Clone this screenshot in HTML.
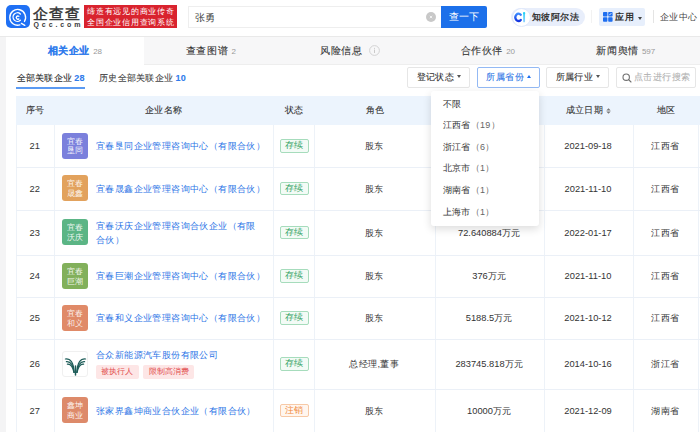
<!DOCTYPE html>
<html><head><meta charset="utf-8">
<style>
*{margin:0;padding:0;box-sizing:border-box}
html,body{white-space:nowrap;width:700px;height:432px;overflow:hidden;background:#f4f4f5;font-family:"Liberation Sans",sans-serif;color:#333;position:relative}
.a{position:absolute}
.hdr{left:0;top:0;width:700px;height:37px;background:#fff;border-bottom:1px solid #e9e9e9}
.logo{left:6.3px;top:5px;width:23.3px;height:23.3px;border-radius:5px;background:#1f70f4}
.brand{left:33px;top:6px;font-size:15px;line-height:16px;color:#333;letter-spacing:1px;-webkit-text-stroke:0.45px #333}
.qcc{left:33.5px;top:20px;font-size:7px;line-height:9px;letter-spacing:2.9px;color:#3a3a3a;font-weight:bold}
.banner{left:84px;top:5px;width:93px;height:23.3px;background:#d9232e;color:#fff;font-size:8px;line-height:11px;padding:0.8px 0 0 3.2px;letter-spacing:0.75px}
.search{left:188px;top:6.2px;width:254px;height:22.2px;border:1px solid #eeeeee;border-right:none;background:#fff}
.search .t{left:6px;top:3.5px;font-size:10px;line-height:13px;color:#444}
.clr{left:426px;top:12px;width:10px;height:10px;border-radius:50%;background:#c8c8c8}
.btn{left:441px;top:6px;width:46px;height:22.3px;background:#1c70ea;border-radius:0 2px 2px 0;color:#fff;font-size:10px;line-height:22px;text-align:center}
.pill{left:511px;top:8px;width:74px;height:18px;border-radius:9px;background:#e8eefb}
.pill .ic{left:0.5px;top:-0.5px;width:19px;height:19px;border-radius:50%;background:#fff;border:1.5px solid #dfe8fb}
.pill .t{left:21px;top:3px;font-size:9px;line-height:13px;font-weight:bold;color:#333;letter-spacing:0.45px}
.app{left:599px;top:8px;width:46px;height:18.2px;border-radius:2px;background:#e7effc}
.app .t{left:16.3px;top:3.2px;font-size:9px;line-height:13px;font-weight:bold;color:#333;letter-spacing:0.4px}
.sep{width:1px;background:#e4e4e4}
.center{left:659.5px;top:10.5px;font-size:9px;line-height:13px;color:#444;letter-spacing:0.6px}
.panel{left:6px;top:37px;width:700px;height:400px;background:#fff}
.tabs{left:6px;top:37px;width:694.5px;height:28px;background:#f7f7f8;border-bottom:1px solid #eeeeee}
.tab{top:0;height:28px;width:137.6px;text-align:center;font-size:10px;line-height:28px;color:#333;letter-spacing:0.65px}
.tab .n{font-size:8px;color:#999;margin-left:3px;letter-spacing:0}
.tab.on{background:#fff;color:#2f7bec;font-weight:bold;border-left:none;height:29px}
.tab.on .n{font-weight:normal}
.sub{top:72px;font-size:9px;line-height:13px;color:#333;letter-spacing:0.3px}
.sub b{color:#2f7bec}
.dd{top:67.1px;height:20.6px;width:62.8px;border:1px solid #e6e6e6;border-radius:2px;background:#fff;font-size:9px;line-height:19px;color:#333;padding-left:8.5px;letter-spacing:0.4px}
.dd.on{border-color:#93b9f4;color:#2b74e6}
.car{display:inline-block;width:0;height:0;border-left:2.5px solid transparent;border-right:2.5px solid transparent;border-top:3px solid #555;vertical-align:middle;margin-left:3px;position:relative;top:-1px}
.car.up{border-top:none;border-bottom:3px solid #1b6ff0}
.tbl{left:15.5px;top:95.5px;width:700px}
.th{top:95.5px;left:15.5px;width:700px;height:29.5px;background:#ecf4fd}
.vl{width:1px;background:#edf2f8}
.hl{height:1px;background:#ebf0f7;left:15.5px;width:700px}
.htx{top:103.5px;font-size:9px;line-height:13px;color:#333;letter-spacing:0.4px}
.cell{font-size:9.3px;line-height:13px;color:#333}
.cj{letter-spacing:0.35px}
.lg{width:26px;height:26px;border-radius:3px;color:rgba(255,255,255,0.92);font-size:8px;line-height:9.7px;text-align:center;padding-top:4px;letter-spacing:0.4px;padding-left:0.4px}
.nm{font-size:9px;line-height:13px;color:#2b74e6;letter-spacing:0.4px}
.st{width:29px;height:13.5px;border:1px solid #a6dcbc;background:#f3fbf6;color:#2fa060;border-radius:2px;font-size:9px;line-height:11.5px;text-align:center;letter-spacing:0.5px;padding-left:0.5px}
.st.x{border-color:#f7c9a6;background:#fff6ef;color:#f08a3c}
.tag{height:14.4px;background:#fde6e6;color:#e24f4f;font-size:8px;line-height:14.4px;padding:0 5.6px;border-radius:2px}
.menu{left:431px;top:90.5px;width:108px;height:135px;background:#fff;border-radius:3px;box-shadow:0 3px 8px rgba(0,0,0,0.14)}
.mi{left:11.5px;font-size:9px;line-height:13px;color:#333;letter-spacing:0.35px}
.mi span{color:#666}
.htx,.dd,.tab,.sub{-webkit-text-stroke-width:0.1px}
.lg,.tab .n,.dd svg{-webkit-text-stroke-width:0}
</style></head><body>
<div class="a hdr"></div>
<div class="a logo"><svg width="23.3" height="23.3" viewBox="0 0 23.3 23.3" fill="none" stroke="#fff" stroke-width="1.35" stroke-linecap="round"><path d="M18.47 16.42 A7.9 7.9 0 1 0 13.9 19.95"/><path d="M15.4 18.4 L18.8 20.3"/><path d="M14.33 8.96 A4.3 4.3 0 1 0 14.33 15.24"/><path d="M12.82 11.29 A1.6 1.6 0 1 0 12.82 13.91"/></svg></div>
<div class="a brand">企查查</div>
<div class="a qcc">Qcc.com</div>
<div class="a banner">缔造有远见的商业传奇<br>全国企业信用查询系统</div>
<div class="a search"><div class="a t">张勇</div></div>
<div class="a clr"><svg class="a" style="left:0;top:0" width="10" height="10" viewBox="0 0 10 10"><path d="M3.8 3.8 L6.2 6.2 M6.2 3.8 L3.8 6.2" stroke="#f4f4f4" stroke-width="0.9"/></svg></div>
<div class="a btn">查一下</div>
<div class="a pill"><div class="a ic"><svg class="a" style="left:1px;top:1px" width="14" height="14" viewBox="0 0 14 14"><defs><linearGradient id="cg" x1="0" y1="0" x2="0" y2="1"><stop offset="0" stop-color="#3b8bff"/><stop offset="1" stop-color="#1536e0"/></linearGradient><linearGradient id="ig" gradientUnits="userSpaceOnUse" x1="0" y1="2" x2="0" y2="12"><stop offset="0" stop-color="#2fd3f7"/><stop offset="1" stop-color="#8fd0ff"/></linearGradient></defs><path d="M6.75 4.7 A3.1 3.7 0 1 0 6.75 9.9" fill="none" stroke="url(#cg)" stroke-width="2.3" stroke-linecap="round"/><path d="M10.1 3.6 L10.1 11.4" stroke="url(#ig)" stroke-width="1.9" stroke-linecap="round"/><circle cx="10.1" cy="3.2" r="1.15" fill="#28d2f5"/></svg></div><div class="a t">知彼阿尔法</div></div>
<div class="a sep" style="left:591px;top:10px;height:13px;background:#f2f2f2"></div>
<div class="a app"><svg class="a" style="left:3.6px;top:4.3px" width="10" height="10" viewBox="0 0 10 10"><rect x="0" y="0" width="4.4" height="4.5" rx="0.8" fill="#1f6ff0"/><rect x="5.2" y="0" width="4.4" height="4.5" rx="0.8" fill="#1f6ff0"/><rect x="0" y="5.3" width="4.4" height="4.5" rx="0.8" fill="#1f6ff0"/><rect x="5.2" y="5.3" width="4.4" height="4.5" rx="0.8" fill="#1f6ff0"/><path d="M6.3 3.2 L8.3 1.2" stroke="#fff" stroke-width="0.9"/></svg><div class="a t">应用</div><i class="a" style="left:38.5px;top:8.5px;width:0;height:0;border-left:2.5px solid transparent;border-right:2.5px solid transparent;border-top:3px solid #444"></i></div>
<div class="a sep" style="left:653px;top:10px;height:13px"></div>
<div class="a center">企业中心</div>

<div class="a panel"></div>
<div class="a tabs">
  <div class="a tab on" style="left:0">相关企业<span class="n">28</span></div>
  <div class="a tab" style="left:136px">查查图谱<span class="n">2</span></div>
  <div class="a tab" style="left:275px">风险信息<svg style="vertical-align:middle;margin-left:6px;position:relative;top:-1px" width="11" height="11" viewBox="0 0 11 11"><circle cx="5.5" cy="5.5" r="4.9" fill="none" stroke="#cfcfcf" stroke-width="0.9"/><path d="M5.5 4.6 V8" stroke="#c4c4c4" stroke-width="0.9"/><circle cx="5.5" cy="3.2" r="0.55" fill="#c4c4c4"/></svg></div>
  <div class="a tab" style="left:413px">合作伙伴<span class="n">20</span></div>
  <div class="a tab" style="left:551px">新闻舆情<span class="n">597</span></div>
</div>

<div class="a sub" style="left:16.5px;font-weight:500;color:#2b2b2b">全部关联企业<b style="margin-left:2px">28</b></div>
<div class="a" style="left:16px;top:87px;width:69px;height:1.6px;background:#5b9af2"></div>
<div class="a sub" style="left:99px;color:#444">历史全部关联企业<b style="margin-left:2px">10</b></div>

<div class="a dd" style="left:407.2px">登记状态<i class="car"></i></div>
<div class="a dd on" style="left:476.9px">所属省份<i class="car up"></i></div>
<div class="a dd" style="left:546.2px">所属行业<i class="car"></i></div>
<div class="a dd" style="left:616px;width:80px;color:#b2b2b2;padding-left:17px"><svg class="a" style="left:4.5px;top:5px" width="10" height="10" viewBox="0 0 10 10" fill="none" stroke="#707070" stroke-width="1.1"><circle cx="4.2" cy="4.2" r="3.2"/><path d="M6.6 6.6 L9 9" stroke-linecap="round"/></svg>点击进行搜索</div>

<div class="a th"></div>
<div class="a htx" style="left:26px">序号</div>
<div class="a htx" style="left:145px">企业名称</div>
<div class="a htx" style="left:285px">状态</div>
<div class="a htx" style="left:365.5px">角色</div>
<div class="a htx" style="left:468px">注册资本</div>
<div class="a htx" style="left:565.5px">成立日期</div><svg class="a" style="left:606px;top:107.5px" width="5" height="6" viewBox="0 0 5 6"><path d="M0.3 2.4 L2.5 0.2 L4.7 2.4Z M0.3 3.6 L2.5 5.8 L4.7 3.6Z" fill="#777"/></svg>
<div class="a htx" style="left:656.5px">地区</div>


<!--ROWS-->
<div class="a vl" style="left:15.5px;top:125px;height:310px"></div>
<div class="a vl" style="left:54px;top:125px;height:310px"></div>
<div class="a vl" style="left:272.5px;top:125px;height:310px"></div>
<div class="a vl" style="left:314px;top:125px;height:310px"></div>
<div class="a vl" style="left:434.5px;top:125px;height:310px"></div>
<div class="a vl" style="left:543.5px;top:125px;height:310px"></div>
<div class="a vl" style="left:632.5px;top:125px;height:310px"></div>
<div class="a vl" style="left:698px;top:125px;height:310px"></div>
<div class="a hl" style="top:167.2px"></div>
<div class="a hl" style="top:209.8px"></div>
<div class="a hl" style="top:255.2px"></div>
<div class="a hl" style="top:297.4px"></div>
<div class="a hl" style="top:339.4px"></div>
<div class="a hl" style="top:388.9px"></div>
<div class="a hl" style="top:433.0px"></div>
<div class="a cell" style="left:15.5px;width:38.5px;text-align:center;top:140.1px">21</div>
<div class="a lg" style="left:62px;top:132.6px;background:#7b80dc">宜春<br>垦同</div>
<div class="a nm" style="left:96px;top:140.1px">宜春垦同企业管理咨询中心（有限合伙）</div>
<div class="a st" style="left:279.5px;top:139.1px">存续</div>
<div class="a cell cj" style="left:314px;width:120.5px;text-align:center;top:140.1px">股东</div>
<div class="a cell" style="left:543.5px;width:89px;text-align:center;top:140.1px">2021-09-18</div>
<div class="a cell cj" style="left:632.5px;width:65.5px;text-align:center;top:140.1px">江西省</div>
<div class="a cell" style="left:15.5px;width:38.5px;text-align:center;top:182.5px">22</div>
<div class="a lg" style="left:62px;top:175.0px;background:#e2a25d">宜春<br>晟鑫</div>
<div class="a nm" style="left:96px;top:182.5px">宜春晟鑫企业管理咨询中心（有限合伙）</div>
<div class="a st" style="left:279.5px;top:181.5px">存续</div>
<div class="a cell cj" style="left:314px;width:120.5px;text-align:center;top:182.5px">股东</div>
<div class="a cell" style="left:543.5px;width:89px;text-align:center;top:182.5px">2021-11-10</div>
<div class="a cell cj" style="left:632.5px;width:65.5px;text-align:center;top:182.5px">江西省</div>
<div class="a cell" style="left:15.5px;width:38.5px;text-align:center;top:226.5px">23</div>
<div class="a lg" style="left:62px;top:219.0px;background:#5bb585">宜春<br>沃庆</div>
<div class="a nm" style="left:96px;top:219.0px;line-height:14.3px">宜春沃庆企业管理咨询合伙企业（有限<br>合伙）</div>
<div class="a st" style="left:279.5px;top:225.5px">存续</div>
<div class="a cell cj" style="left:314px;width:120.5px;text-align:center;top:226.5px">股东</div>
<div class="a cell" style="left:434.5px;width:109px;text-align:center;top:226.5px">72.640884万元</div>
<div class="a cell" style="left:543.5px;width:89px;text-align:center;top:226.5px">2022-01-17</div>
<div class="a cell cj" style="left:632.5px;width:65.5px;text-align:center;top:226.5px">江西省</div>
<div class="a cell" style="left:15.5px;width:38.5px;text-align:center;top:270.3px">24</div>
<div class="a lg" style="left:62px;top:262.8px;background:#82b05b">宜春<br>巨潮</div>
<div class="a nm" style="left:96px;top:270.3px">宜春巨潮企业管理咨询中心（有限合伙）</div>
<div class="a st" style="left:279.5px;top:269.3px">存续</div>
<div class="a cell cj" style="left:314px;width:120.5px;text-align:center;top:270.3px">股东</div>
<div class="a cell" style="left:434.5px;width:109px;text-align:center;top:270.3px">376万元</div>
<div class="a cell" style="left:543.5px;width:89px;text-align:center;top:270.3px">2021-11-10</div>
<div class="a cell cj" style="left:632.5px;width:65.5px;text-align:center;top:270.3px">江西省</div>
<div class="a cell" style="left:15.5px;width:38.5px;text-align:center;top:312.4px">25</div>
<div class="a lg" style="left:62px;top:304.9px;background:#e08a68">宜春<br>和义</div>
<div class="a nm" style="left:96px;top:312.4px">宜春和义企业管理咨询中心（有限合伙）</div>
<div class="a st" style="left:279.5px;top:311.4px">存续</div>
<div class="a cell cj" style="left:314px;width:120.5px;text-align:center;top:312.4px">股东</div>
<div class="a cell" style="left:434.5px;width:109px;text-align:center;top:312.4px">5188.5万元</div>
<div class="a cell" style="left:543.5px;width:89px;text-align:center;top:312.4px">2021-10-12</div>
<div class="a cell cj" style="left:632.5px;width:65.5px;text-align:center;top:312.4px">江西省</div>
<div class="a cell" style="left:15.5px;width:38.5px;text-align:center;top:358.1px">26</div>
<div class="a lg" style="left:62px;top:350.6px;background:#fff;border:1px solid #f0f0f0;padding:0"><svg class="a" style="left:-1px;top:-1px" width="27" height="27" viewBox="0 0 27 27" fill="none" stroke="#1e5d59" stroke-width="1.2" stroke-linecap="round"><path d="M3.4 8.0 C8.5 7.6 11.5 11.0 12.2 21.5"/><path d="M23.6 8.0 C18.5 7.6 15.5 11.0 14.8 21.5"/><path d="M4.4 10.6 C8.5 10.2 11.2 13.6 12.1 21.5"/><path d="M22.6 10.6 C18.5 10.2 15.8 13.6 14.9 21.5"/><path d="M5.4 13.2 C8.5 12.8 10.9 16.2 12.0 21.5"/><path d="M21.6 13.2 C18.5 12.8 16.1 16.2 15.0 21.5"/><path d="M13.5 15 L13.5 24" stroke-width="1.5"/></svg></div>
<div class="a nm" style="left:96px;top:348.6px">合众新能源汽车股份有限公司</div>
<div class="a tag" style="left:95.5px;top:364.6px">被执行人</div>
<div class="a tag" style="left:143px;top:364.6px">限制高消费</div>
<div class="a st" style="left:279.5px;top:357.1px">存续</div>
<div class="a cell cj" style="left:314px;width:120.5px;text-align:center;top:358.1px">总经理,董事</div>
<div class="a cell" style="left:434.5px;width:109px;text-align:center;top:358.1px">283745.818万元</div>
<div class="a cell" style="left:543.5px;width:89px;text-align:center;top:358.1px">2014-10-16</div>
<div class="a cell cj" style="left:632.5px;width:65.5px;text-align:center;top:358.1px">浙江省</div>
<div class="a cell" style="left:15.5px;width:38.5px;text-align:center;top:404.9px">27</div>
<div class="a lg" style="left:62px;top:397.4px;background:#dd8a6a">鑫坤<br>商业</div>
<div class="a nm" style="left:96px;top:404.9px">张家界鑫坤商业合伙企业（有限合伙）</div>
<div class="a st x" style="left:279.5px;top:403.9px">注销</div>
<div class="a cell cj" style="left:314px;width:120.5px;text-align:center;top:404.9px">股东</div>
<div class="a cell" style="left:434.5px;width:109px;text-align:center;top:404.9px">10000万元</div>
<div class="a cell" style="left:543.5px;width:89px;text-align:center;top:404.9px">2021-12-09</div>
<div class="a cell cj" style="left:632.5px;width:65.5px;text-align:center;top:404.9px">湖南省</div>
<div class="a menu">
<div class="a mi" style="top:7.5px">不限<span></span></div>
<div class="a mi" style="top:28.9px">江西省<span>（19）</span></div>
<div class="a mi" style="top:50.2px">浙江省<span>（6）</span></div>
<div class="a mi" style="top:71.9px">北京市<span>（1）</span></div>
<div class="a mi" style="top:93.3px">湖南省<span>（1）</span></div>
<div class="a mi" style="top:115.2px">上海市<span>（1）</span></div>
</div>
</body></html>
